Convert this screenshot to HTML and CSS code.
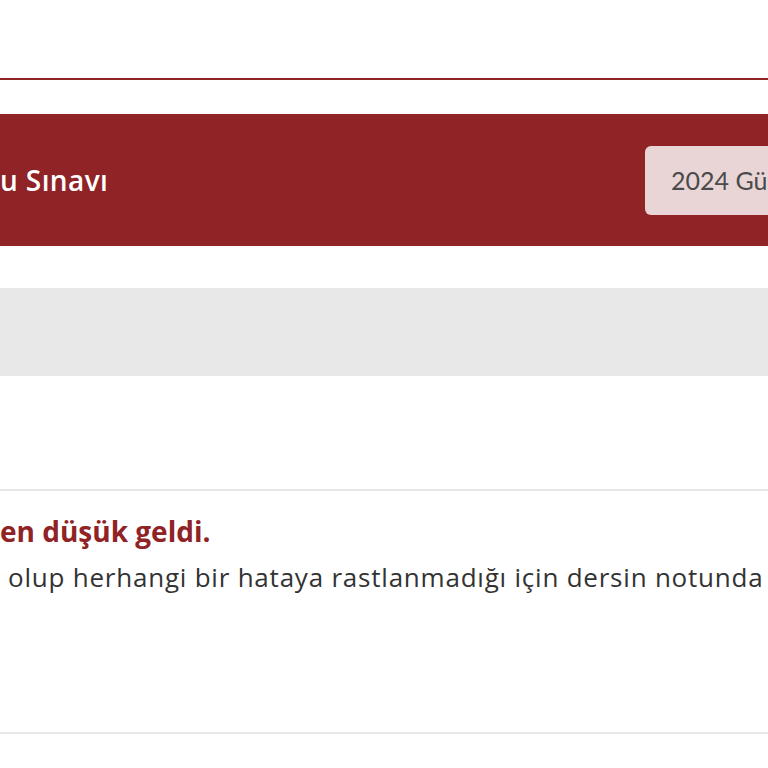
FILE: index.html
```html
<!DOCTYPE html>
<html lang="tr">
<head>
  <meta charset="UTF-8" />
  <title>Sınav Sonucu</title>
  <link rel="stylesheet" href="styles.css">
</head>
<body>
  <header class="site-header"></header>

  <section class="hero">
    <h1 class="hero-title">u Sınavı</h1>
    <button class="term-btn">2024 Gü</button>
  </section>

  <div class="toolbar"></div>

  <article class="answer">
    <h2 class="answer-title">en düşük geldi.</h2>
    <p class="answer-text">olup herhangi bir hataya rastlanmadığı için dersin notunda</p>
  </article>
</body>
</html>
```

FILE: styles.css
```css
body {
  margin: 0;
  background: #fff;
  font-family: 'Open Sans', 'Lato', sans-serif;
  overflow: hidden;
  height: 768px;
}

.site-header {
  height: 78px;
  border-bottom: 2px solid #8f2326;
}

.hero {
  margin-top: 34px;
  height: 132px;
  background: #8f2326;
  display: flex;
  align-items: center;
  justify-content: space-between;
}

.hero-title {
  margin: 0;
  color: #fff;
  font-size: 28px;
  font-weight: 600;
  letter-spacing: 0.4px;
}

.term-btn {
  flex-shrink: 0;
  width: 220px;
  height: 69px;
  margin-right: -97px;
  padding: 0 26px;
  border: none;
  border-radius: 6px;
  background: #e9d5d6;
  color: #4a4a4a;
  font-family: 'Lato', sans-serif;
  font-size: 25px;
  text-align: left;
  white-space: nowrap;
}

.toolbar {
  margin-top: 42px;
  height: 88px;
  background: #e8e8e8;
}

.answer {
  margin-top: 113px;
  height: 241px;
  border-top: 2px solid #e6e6e6;
  border-bottom: 2px solid #e8e8e8;
}

.answer-title {
  margin: 21px 0 0;
  color: #8f2326;
  font-size: 28px;
  font-weight: 700;
}

.answer-text {
  margin: 9px 0 0 8px;
  color: #333;
  font-size: 26px;
  letter-spacing: 0.78px;
  white-space: nowrap;
}
```
